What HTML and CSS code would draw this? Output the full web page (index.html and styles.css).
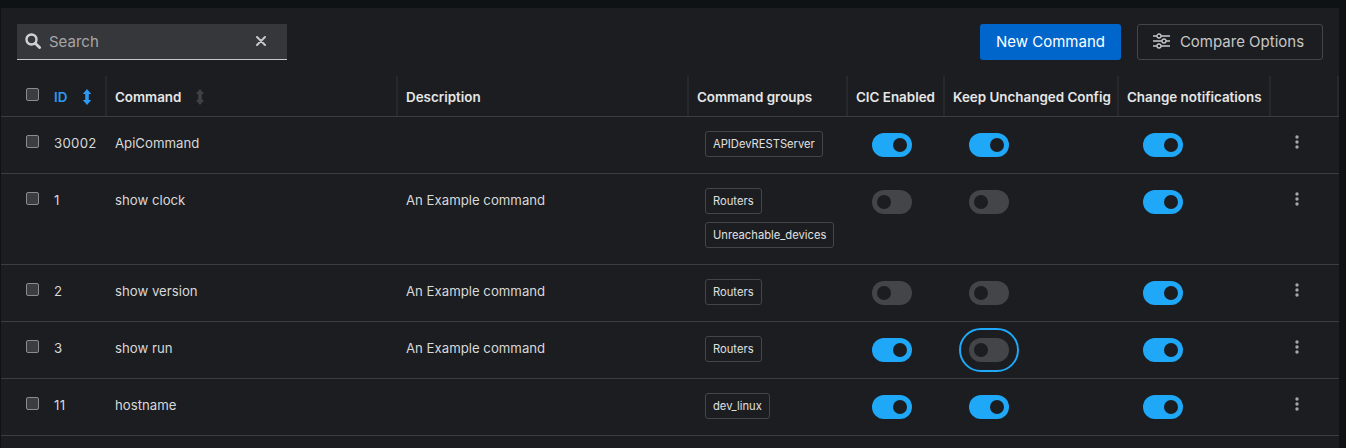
FILE: index.html
```html
<!DOCTYPE html>
<html lang="en">
<head>
<meta charset="utf-8">
<title>Commands</title>
<link rel="stylesheet" href="styles.css">
</head>
<body>
<svg class="defs" width="0" height="0" aria-hidden="true">
  <symbol id="sort" viewBox="0 0 10 16"><path d="M5 0 9.2 5H6.8v6h2.4L5 16 .8 11h2.4V5H.8z"/></symbol>
  <symbol id="kebab" viewBox="0 0 4 14"><circle cx="2" cy="2" r="1.7"/><circle cx="2" cy="7" r="1.7"/><circle cx="2" cy="12" r="1.7"/></symbol>
</svg>
<main class="panel">
  <div class="toolbar">
    <div class="search">
      <svg class="search-icon" viewBox="0 0 16 16"><circle cx="6.5" cy="6.5" r="5" fill="none" stroke="currentColor" stroke-width="2.4"/><path d="M10.2 10.2 14.6 14.6" stroke="currentColor" stroke-width="2.8" stroke-linecap="round"/></svg>
      <span class="search-text">Search</span>
      <svg class="clear-icon" viewBox="0 0 10 10"><path d="M1 1 9 9M9 1 1 9" stroke="currentColor" stroke-width="2" stroke-linecap="round"/></svg>
    </div>
    <div class="actions">
      <button class="btn btn-primary">New Command</button>
      <button class="btn btn-secondary">
        <svg class="btn-icon" viewBox="0 0 17 16" fill="none" stroke="currentColor" stroke-width="1.3"><path d="M0 3h4M8 3h9M0 8h9M13 8h4M0 13h4M8 13h9"/><circle cx="6" cy="3" r="2"/><circle cx="11" cy="8" r="2"/><circle cx="6" cy="13" r="2"/></svg>
        Compare Options
      </button>
    </div>
  </div>
  <table class="grid">
    <colgroup>
      <col class="c-check"><col class="c-id"><col class="c-cmd"><col class="c-desc"><col class="c-groups"><col class="c-cic"><col class="c-keep"><col class="c-notif"><col class="c-menu">
    </colgroup>
    <thead>
      <tr>
        <th class="cell-check"><span class="check"></span></th>
        <th class="th-sep id-head">ID <svg class="sort sort-active"><use href="#sort"/></svg></th>
        <th class="th-sep">Command <svg class="sort sort-idle"><use href="#sort"/></svg></th>
        <th class="th-sep">Description</th>
        <th class="th-sep">Command groups</th>
        <th class="th-sep">CIC Enabled</th>
        <th class="th-sep">Keep Unchanged Config</th>
        <th class="th-sep">Change notifications</th>
        <th class="th-sep th-last"></th>
      </tr>
    </thead>
    <tbody>
      <tr>
        <td class="cell-check"><span class="check"></span></td><td class="cell-id">30002</td><td>ApiCommand</td><td></td>
        <td class="cell-groups"><span class="tag">APIDevRESTServer</span></td>
        <td class="cell-switch"><span class="switch on"></span></td>
        <td class="cell-switch"><span class="switch on"></span></td>
        <td class="cell-switch"><span class="switch on"></span></td>
        <td class="cell-menu"><svg class="kebab"><use href="#kebab"/></svg></td>
      </tr>
      <tr>
        <td class="cell-check"><span class="check"></span></td><td class="cell-id">1</td><td>show clock</td><td>An Example command</td>
        <td class="cell-groups"><span class="tag">Routers</span><span class="tag">Unreachable_devices</span></td>
        <td class="cell-switch"><span class="switch"></span></td>
        <td class="cell-switch"><span class="switch"></span></td>
        <td class="cell-switch"><span class="switch on"></span></td>
        <td class="cell-menu"><svg class="kebab"><use href="#kebab"/></svg></td>
      </tr>
      <tr>
        <td class="cell-check"><span class="check"></span></td><td class="cell-id">2</td><td>show version</td><td>An Example command</td>
        <td class="cell-groups"><span class="tag">Routers</span></td>
        <td class="cell-switch"><span class="switch"></span></td>
        <td class="cell-switch"><span class="switch"></span></td>
        <td class="cell-switch"><span class="switch on"></span></td>
        <td class="cell-menu"><svg class="kebab"><use href="#kebab"/></svg></td>
      </tr>
      <tr>
        <td class="cell-check"><span class="check"></span></td><td class="cell-id">3</td><td>show run</td><td>An Example command</td>
        <td class="cell-groups"><span class="tag">Routers</span></td>
        <td class="cell-switch"><span class="switch on"></span></td>
        <td class="cell-switch"><span class="switch focus"></span></td>
        <td class="cell-switch"><span class="switch on"></span></td>
        <td class="cell-menu"><svg class="kebab"><use href="#kebab"/></svg></td>
      </tr>
      <tr>
        <td class="cell-check"><span class="check"></span></td><td class="cell-id">11</td><td>hostname</td><td></td>
        <td class="cell-groups"><span class="tag">dev_linux</span></td>
        <td class="cell-switch"><span class="switch on"></span></td>
        <td class="cell-switch"><span class="switch on"></span></td>
        <td class="cell-switch"><span class="switch on"></span></td>
        <td class="cell-menu"><svg class="kebab"><use href="#kebab"/></svg></td>
      </tr>
    </tbody>
  </table>
</main>
</body>
</html>
```
FILE: styles.css
```css
* { box-sizing: border-box; }
html, body { height: 100%; }
body {
  margin: 0;
  padding: 8px 7px 0 1px;
  background: #0f1214;
  color: #e0e0e0;
  font-family: Inter, "Open Sans", sans-serif;
  font-size: 14px;
  overflow: hidden;
}
.defs { position: absolute; }
.panel { background: #1b1d21; height: 440px; }
.toolbar {
  display: flex;
  justify-content: space-between;
  padding: 16px;
}
.search {
  width: 270px;
  height: 36px;
  display: flex;
  align-items: center;
  background: #36373b;
  border-bottom: 1px solid #c7c7c7;
  padding: 0 12px 1px 8px;
  color: #a6a6a6;
  font-size: 15px;
}
.search-icon { width: 16px; height: 16px; color: #d2d2d2; flex: none; }
.search-text { margin-left: 8px; flex: 1; }
.clear-icon { width: 10px; height: 10px; margin-right: 9px; color: #c7c7c7; flex: none; }
.actions { display: flex; gap: 16px; }
.btn {
  height: 36px;
  border-radius: 3px;
  font: inherit;
  font-size: 15px;
  display: flex;
  align-items: center;
  justify-content: center;
  padding: 0 0 2px;
}
.btn-primary { width: 141px; background: #0066cc; border: 0; color: #fff; }
.btn-secondary {
  width: 186px;
  gap: 10px;
  background: transparent;
  border: 1px solid #444548;
  color: #c7c7c7;
  padding-right: 3px;
}
.btn-icon { width: 17px; height: 16px; }
.grid {
  table-layout: fixed;
  border-collapse: collapse;
  width: 1338px;
}
.c-check { width: 44px; }
.c-id { width: 61px; }
.c-cmd, .c-desc { width: 291px; }
.c-groups { width: 159px; }
.c-cic { width: 97px; }
.c-keep { width: 174px; }
.c-notif { width: 152px; }
.c-menu { width: 69px; }
th, td {
  text-align: left;
  vertical-align: top;
  padding: 16px 0 0 9px;
  font-weight: 400;
}
thead tr { height: 40px; border-bottom: 1px solid #3c3d40; }
th {
  font-weight: 600;
  font-size: 13.4px;
  line-height: 20px;
  padding-top: 11px;
  color: #e6e6e6;
  white-space: nowrap;
}
.th-sep { position: relative; }
.th-sep::before {
  content: "";
  position: absolute;
  left: -1px;
  top: 0;
  bottom: 0;
  width: 2px;
  background: #26282c;
}
.th-last::after {
  content: "";
  position: absolute;
  right: 0;
  top: 0;
  bottom: 0;
  width: 2px;
  background: #26282c;
}
.id-head { color: #2b9af3; padding-left: 9px; }
.id-head::before { display: none; }
tbody tr { height: 57px; border-bottom: 1px solid #3c3d40; }
tbody tr:nth-child(2) { height: 91px; }
td { line-height: 20px; color: #d8d8d8; font-size: 13.2px; }
.cell-id { letter-spacing: .3px; }
th.cell-check, td.cell-check { padding-left: 25px; padding-right: 0; }
.check {
  display: block;
  width: 13px;
  height: 13px;
  margin-top: 1px;
  background: #3c3d40;
  border: 1px solid #8a8d90;
  border-radius: 2px;
}
td .check { margin-top: 2px; }
.sort { width: 10px; height: 16px; vertical-align: -3px; }
.sort-idle { fill: #3f4145; margin-left: 10px; }
.sort-active { fill: #2b9af3; margin-left: 11px; }
.cell-groups { padding-top: 14px; padding-left: 17px; }
.tag {
  display: block;
  width: fit-content;
  height: 26px;
  margin-bottom: 8px;
  padding: 0 7px;
  line-height: 24px;
  font-size: 11.2px;
  color: #e0e0e0;
  border: 1px solid #444548;
  border-radius: 3px;
  white-space: nowrap;
}
.cell-switch { padding-top: 16px; }
.switch {
  display: block;
  position: relative;
  width: 40px;
  height: 24px;
  border-radius: 12px;
  background: #444548;
  margin-left: 16px;
}
.switch::after {
  content: "";
  position: absolute;
  left: 5px;
  top: 5px;
  width: 14px;
  height: 14px;
  border-radius: 50%;
  background: #1b1d21;
}
.switch.on { background: #1fa7f8; }
.switch.on::after { left: 21px; }
.switch.focus { outline: 2px solid #1fa7f8; outline-offset: 8px; }
.cell-menu { padding-left: 25px; padding-top: 18px; }
.kebab { display: block; width: 4px; height: 14px; fill: #a6a6a6; }
```
